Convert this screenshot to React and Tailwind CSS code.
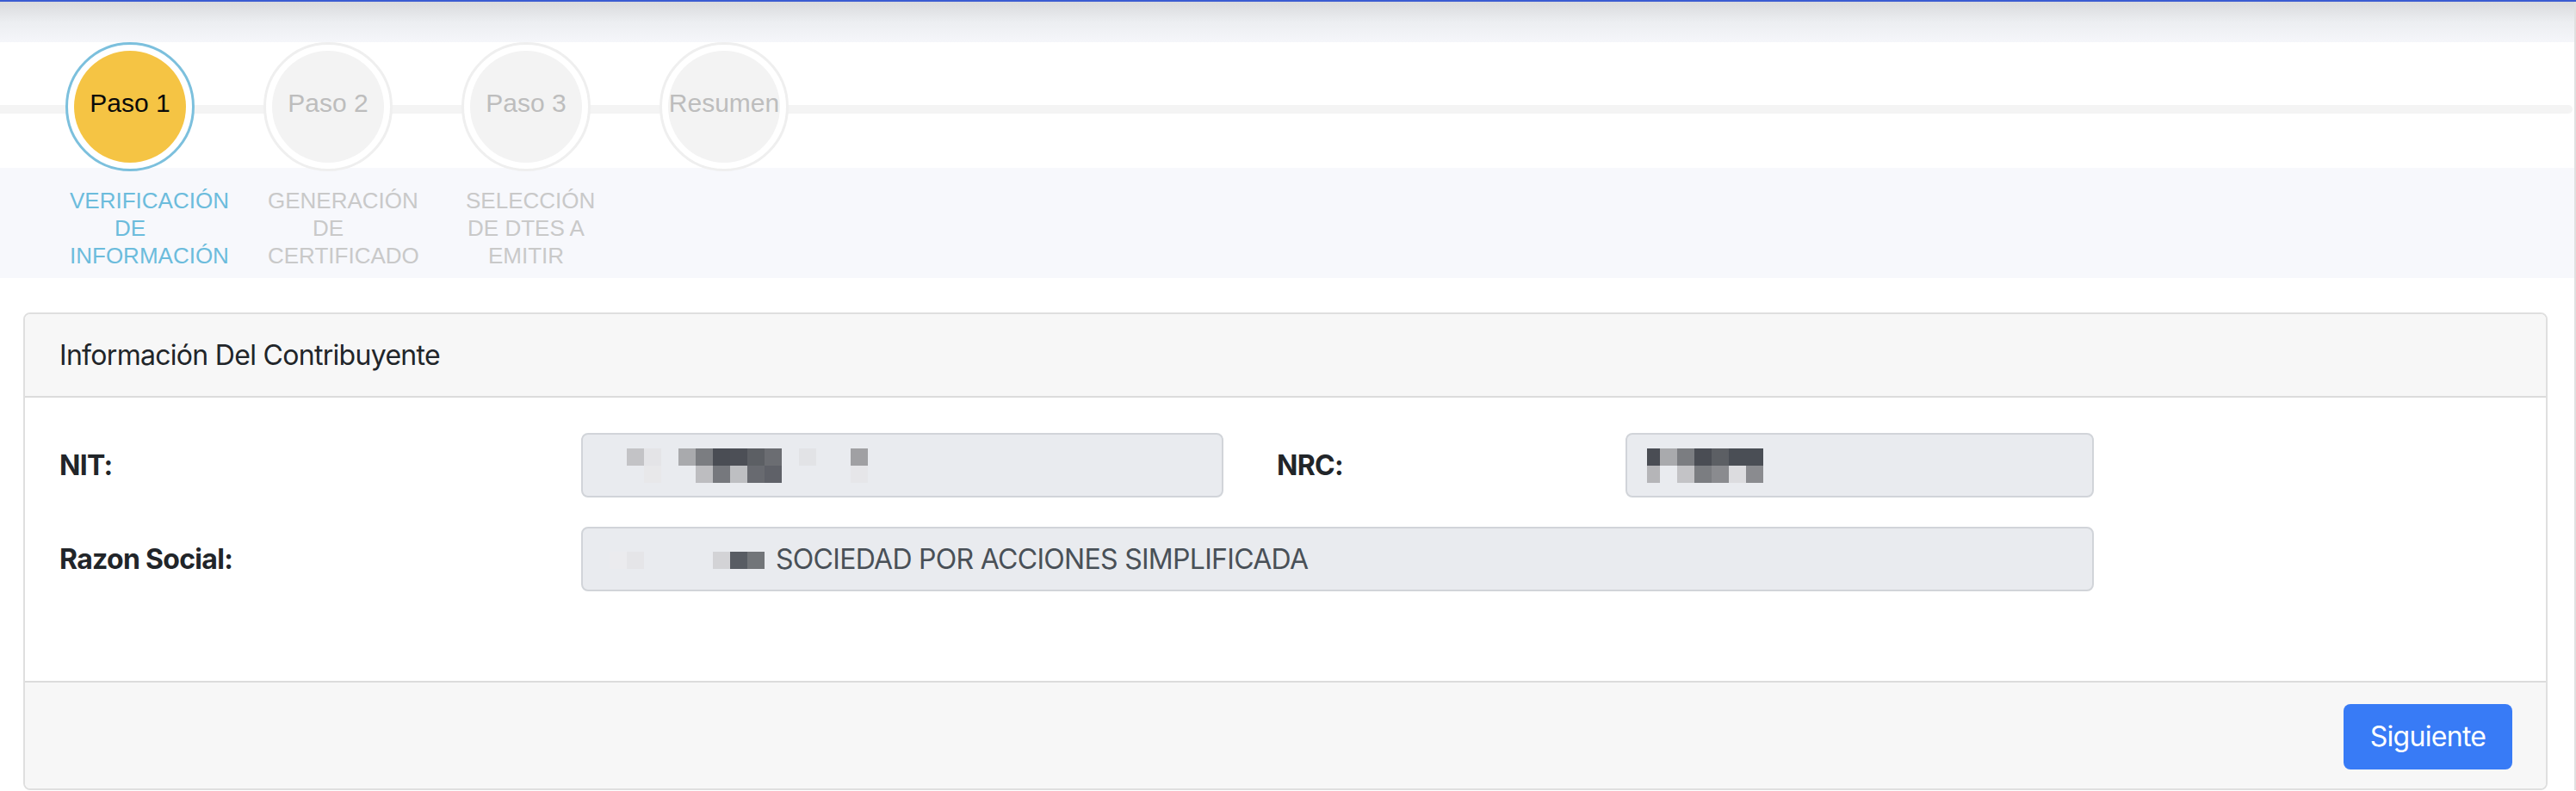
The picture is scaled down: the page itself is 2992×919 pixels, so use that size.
import React from "react";

const steps = [
  { title: "Paso 1", label: "VERIFICACIÓN DE INFORMACIÓN", active: true },
  { title: "Paso 2", label: "GENERACIÓN DE CERTIFICADO" },
  { title: "Paso 3", label: "SELECCIÓN DE DTES A EMITIR" },
  { title: "Resumen", label: "" },
];

// pixelated (redacted) blocks: [x, y, color]
const NIT_CELLS = [
  [0, 0, "#c3c3c6"], [20, 0, "#e4e4e7"], [60, 0, "#a9aaad"], [80, 0, "#7b7d81"],
  [100, 0, "#4a4d54"], [120, 0, "#4c4f56"], [140, 0, "#5c5f64"], [160, 0, "#6b6d72"],
  [200, 0, "#e2e3e6"], [260, 0, "#a0a0a3"],
  [20, 20, "#e8e8ea"], [80, 20, "#bdbdc0"], [100, 20, "#76787d"], [120, 20, "#bebfc2"],
  [140, 20, "#686a70"], [160, 20, "#5f6168"], [260, 20, "#e6e6e9"],
];

const NRC_CELLS = [
  [-5, 0, "#4a4d54"], [15, 0, "#a9aaad"], [35, 0, "#7b7d81"], [55, 0, "#4a4d54"],
  [75, 0, "#5c5f64"], [95, 0, "#4a4e55"], [115, 0, "#4a4e55"],
  [-5, 20, "#b5b5b8"], [35, 20, "#c3c3c6"], [55, 20, "#7b7d81"],
  [75, 20, "#8a8b8f"], [95, 20, "#dcdcdf"], [115, 20, "#8a8b8f"],
];

const RAZON_CELLS = [
  [0, 0, "#ebebee"], [20, 0, "#e5e5e8"], [120, 0, "#d3d3d6"], [140, 0, "#585c63"], [160, 0, "#727579"],
];

function Pixels({ cells, width, height }) {
  return (
    <svg width={width} height={height} viewBox={`0 0 ${width} ${height}`} className="block shrink-0">
      {cells.map(([x, y, c], i) => (
        <rect key={i} x={Math.max(0, x)} y={y} width={x < 0 ? 20 + x : 20} height={20} fill={c} />
      ))}
    </svg>
  );
}

function Stepper() {
  return (
    <div style={{ fontFamily: '"Liberation Sans", Arial, sans-serif' }}>
      <div className="relative h-[146px] bg-white">
        <div className="absolute left-0 right-[2px] top-[73px] h-[10px] rounded-r-full bg-[#f4f4f4]" />
        <div className="relative z-10 flex pl-[36px]">
          {steps.map((s) => (
            <div key={s.title} className="flex w-[230px] justify-center">
              <div
                className={`h-[150px] w-[150px] rounded-full border-[3px] bg-white p-[7px] ${
                  s.active ? "border-[#7cc0dd]" : "border-[#efefef]"
                }`}
              >
                <div
                  className={`flex h-full w-full items-center justify-center whitespace-nowrap rounded-full pb-[9px] text-[30px] ${
                    s.active ? "bg-[#f5c444] text-[#0a0a0a]" : "bg-[#f3f3f3] text-[#bdbdbd]"
                  }`}
                >
                  {s.title}
                </div>
              </div>
            </div>
          ))}
        </div>
      </div>
      <div className="flex h-[128px] bg-[#f7f8fc] pl-[36px] pt-[22px]">
        {steps.map((s) => (
          <div key={s.title} className="flex w-[230px] justify-center">
            <div
              className={`w-[140px] text-center text-[26px] leading-[32px] ${
                s.active ? "text-[#6cbcdc]" : "text-[#c9c9c9]"
              }`}
            >
              {s.label}
            </div>
          </div>
        ))}
      </div>
    </div>
  );
}

export default function App() {
  return (
    <div className="w-[2992px] bg-white" style={{ fontFamily: 'Inter, "Liberation Sans", sans-serif' }}>
      <div className="h-[2px] bg-[#3b5bd1]" />
      <div className="border-r-2 border-[#e0e0e0]">
        <div className="h-[47px] bg-linear-to-b from-[#d9dadd] via-[#eceef1] to-[#f5f6fa]" />
        <Stepper />
        <div className="mb-[2px] ml-[27px] mr-[31px] mt-[40px] overflow-hidden rounded-[8px] border-2 border-[#dfdfdf] tracking-[-0.7px]">
          <div className="border-b-2 border-[#dcdcdc] bg-[#f7f7f7] px-[40px] pb-[23px] pt-[24px] text-[32px] leading-[48px] text-[#212529]">
            Información Del Contribuyente
          </div>
          <div className="bg-white pb-[104px] pl-[40px] pt-[41px] text-[32px] text-[#212529]">
            <div className="flex h-[75px] items-center">
              <div className="w-[606px] font-bold">NIT:</div>
              <div className="flex h-[75px] w-[746px] items-center rounded-[8px] border-2 border-[#d1d4d9] bg-[#e9ebef] pl-[51px]">
                <Pixels cells={NIT_CELLS} width={280} height={40} />
              </div>
              <div className="ml-[62px] w-[405px] font-bold">NRC:</div>
              <div className="flex h-[75px] w-[544px] items-center rounded-[8px] border-2 border-[#d1d4d9] bg-[#e9ebef] pl-[23px]">
                <Pixels cells={NRC_CELLS} width={135} height={40} />
              </div>
            </div>
            <div className="mt-[34px] flex h-[75px] items-center">
              <div className="w-[606px] font-bold">Razon Social:</div>
              <div className="flex h-[75px] w-[1757px] items-center rounded-[8px] border-2 border-[#d1d4d9] bg-[#e9ebef] pl-[31px] text-[#495057]">
                <div className="mt-[3px]">
                  <Pixels cells={RAZON_CELLS} width={180} height={20} />
                </div>
                <span className="ml-[13px] leading-[48px]">SOCIEDAD POR ACCIONES SIMPLIFICADA</span>
              </div>
            </div>
          </div>
          <div className="flex justify-end border-t-2 border-[#dcdcdc] bg-[#f7f7f7] pb-[22px] pr-[39px] pt-[25px]">
            <button className="flex h-[76px] w-[196px] items-center justify-center rounded-[8px] bg-[#387bf6] text-[32px] tracking-[-0.7px] text-white">
              Siguiente
            </button>
          </div>
        </div>
      </div>
    </div>
  );
}
